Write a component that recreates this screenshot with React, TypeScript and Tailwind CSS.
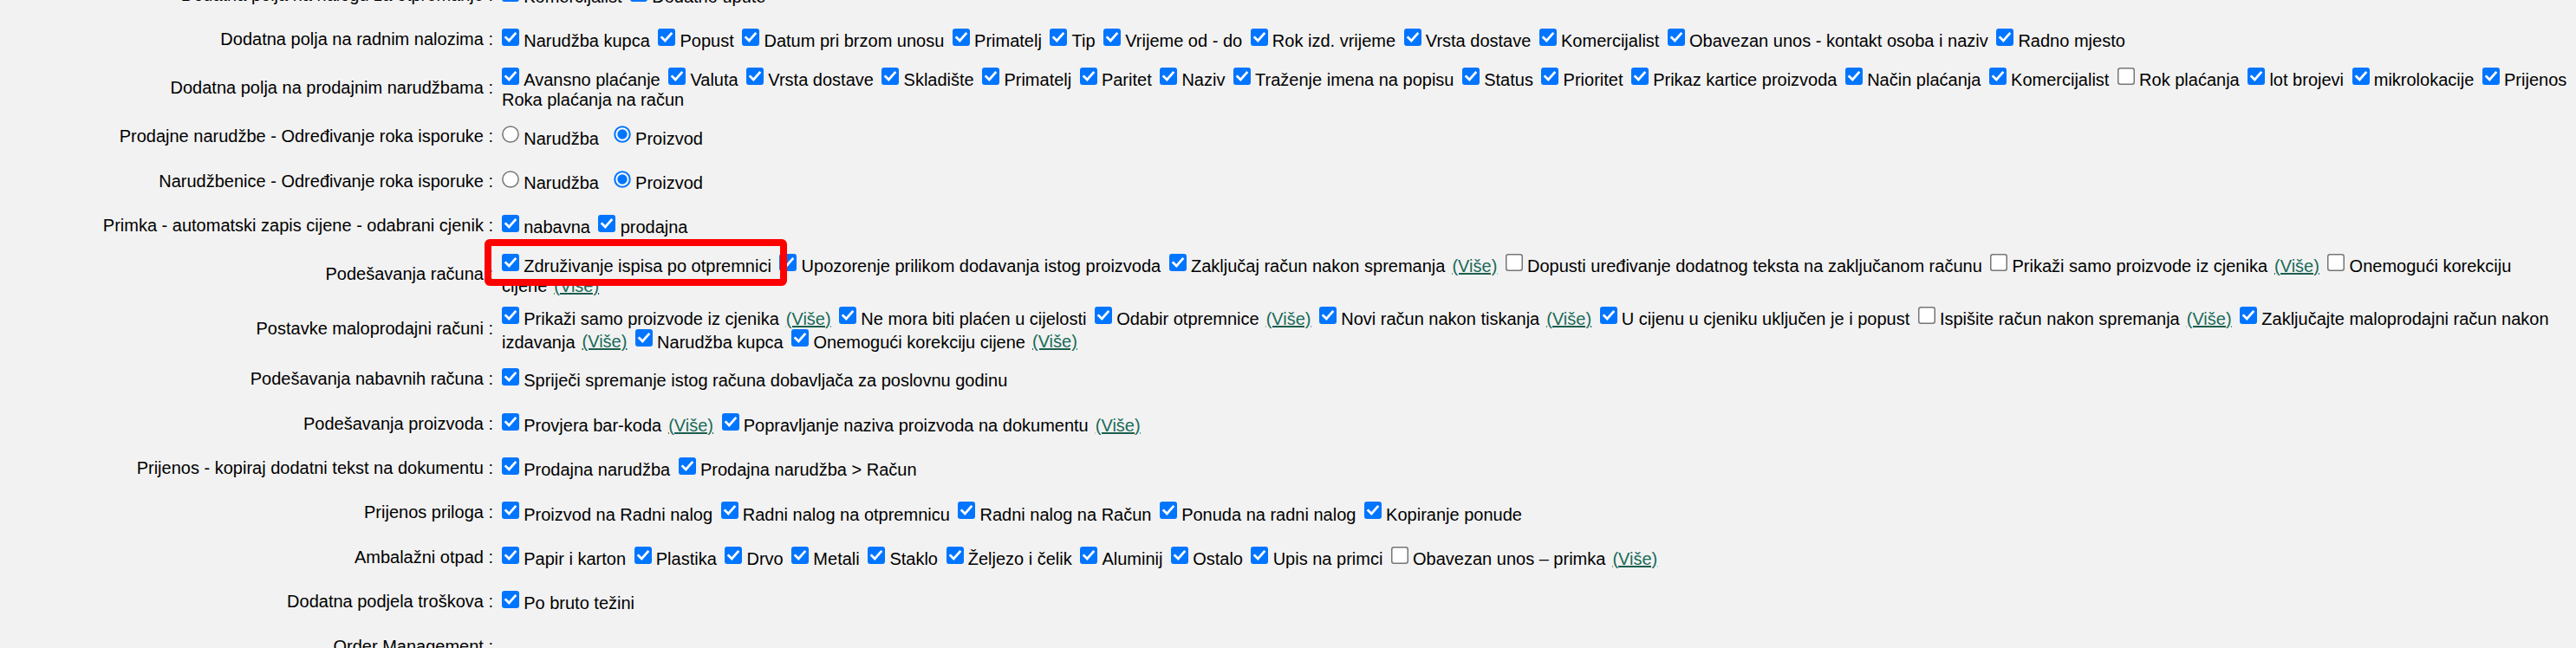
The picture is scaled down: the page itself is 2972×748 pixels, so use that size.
import React from "react";

type Seg = { c?: boolean; r?: boolean; text: string; more?: boolean };
type Row = { label: string; lines: Seg[][] };

const on = (text: string, more?: boolean): Seg => ({ c: true, text, more });
const off = (text: string, more?: boolean): Seg => ({ c: false, text, more });
const rad = (text: string, checked: boolean): Seg => ({ r: checked, text });
const txt = (text: string, more?: boolean): Seg => ({ text, more });

const rows: Row[] = [
  {
    label: "Dodatna polja na nalogu za otpremanje :",
    lines: [[on("Komercijalist"), on("Dodatno upute")]],
  },
  {
    label: "Dodatna polja na radnim nalozima :",
    lines: [
      [
        on("Narudžba kupca"),
        on("Popust"),
        on("Datum pri brzom unosu"),
        on("Primatelj"),
        on("Tip"),
        on("Vrijeme od - do"),
        on("Rok izd. vrijeme"),
        on("Vrsta dostave"),
        on("Komercijalist"),
        on("Obavezan unos - kontakt osoba i naziv"),
        on("Radno mjesto"),
      ],
    ],
  },
  {
    label: "Dodatna polja na prodajnim narudžbama :",
    lines: [
      [
        on("Avansno plaćanje"),
        on("Valuta"),
        on("Vrsta dostave"),
        on("Skladište"),
        on("Primatelj"),
        on("Paritet"),
        on("Naziv"),
        on("Traženje imena na popisu"),
        on("Status"),
        on("Prioritet"),
        on("Prikaz kartice proizvoda"),
        on("Način plaćanja"),
        on("Komercijalist"),
        off("Rok plaćanja"),
        on("lot brojevi"),
        on("mikrolokacije"),
        on("Prijenos"),
      ],
      [txt("Roka plaćanja na račun")],
    ],
  },
  {
    label: "Prodajne narudžbe - Određivanje roka isporuke :",
    lines: [[rad("Narudžba", false), rad("Proizvod", true)]],
  },
  {
    label: "Narudžbenice - Određivanje roka isporuke :",
    lines: [[rad("Narudžba", false), rad("Proizvod", true)]],
  },
  {
    label: "Primka - automatski zapis cijene - odabrani cjenik :",
    lines: [[on("nabavna"), on("prodajna")]],
  },
  {
    label: "Podešavanja računa :",
    lines: [
      [
        on("Združivanje ispisa po otpremnici"),
        on("Upozorenje prilikom dodavanja istog proizvoda"),
        on("Zaključaj račun nakon spremanja", true),
        off("Dopusti uređivanje dodatnog teksta na zaključanom računu"),
        off("Prikaži samo proizvode iz cjenika", true),
        off("Onemogući korekciju"),
      ],
      [txt("cijene", true)],
    ],
  },
  {
    label: "Postavke maloprodajni računi :",
    lines: [
      [
        on("Prikaži samo proizvode iz cjenika", true),
        on("Ne mora biti plaćen u cijelosti"),
        on("Odabir otpremnice", true),
        on("Novi račun nakon tiskanja", true),
        on("U cijenu u cjeniku uključen je i popust"),
        off("Ispišite račun nakon spremanja", true),
        on("Zaključajte maloprodajni račun nakon"),
      ],
      [txt("izdavanja", true), on("Narudžba kupca"), on("Onemogući korekciju cijene", true)],
    ],
  },
  {
    label: "Podešavanja nabavnih računa :",
    lines: [[on("Spriječi spremanje istog računa dobavljača za poslovnu godinu")]],
  },
  {
    label: "Podešavanja proizvoda :",
    lines: [[on("Provjera bar-koda", true), on("Popravljanje naziva proizvoda na dokumentu", true)]],
  },
  {
    label: "Prijenos - kopiraj dodatni tekst na dokumentu :",
    lines: [[on("Prodajna narudžba"), on("Prodajna narudžba > Račun")]],
  },
  {
    label: "Prijenos priloga :",
    lines: [
      [
        on("Proizvod na Radni nalog"),
        on("Radni nalog na otpremnicu"),
        on("Radni nalog na Račun"),
        on("Ponuda na radni nalog"),
        on("Kopiranje ponude"),
      ],
    ],
  },
  {
    label: "Ambalažni otpad :",
    lines: [
      [
        on("Papir i karton"),
        on("Plastika"),
        on("Drvo"),
        on("Metali"),
        on("Staklo"),
        on("Željezo i čelik"),
        on("Aluminij"),
        on("Ostalo"),
        on("Upis na primci"),
        off("Obavezan unos – primka", true),
      ],
    ],
  },
  {
    label: "Dodatna podjela troškova :",
    lines: [[on("Po bruto težini")]],
  },
  { label: "Order Management :", lines: [[]] },
  { label: "Ostale postavke :", lines: [[]] },
];

function Checkbox({ checked, first }: { checked: boolean; first: boolean }) {
  return (
    <svg
      width="20"
      height="20"
      viewBox="0 0 20 20"
      className={
        "inline-block align-baseline mt-[0.8px] mb-[1px] mr-[5.2px] " +
        (first ? "ml-0" : "ml-[9.5px]")
      }
    >
      {checked ? (
        <>
          <rect x="0" y="0" width="20" height="20" rx="3" fill="#0075ff" />
          <path
            d="M4.6 10.3 L8.3 14 L15.4 5.9"
            fill="none"
            stroke="#ffffff"
            strokeWidth="2.7"
            strokeLinecap="square"
            strokeLinejoin="miter"
          />
        </>
      ) : (
        <rect
          x="0.75"
          y="0.75"
          width="18.5"
          height="18.5"
          rx="2.5"
          fill="#ffffff"
          stroke="#767676"
          strokeWidth="1.5"
        />
      )}
    </svg>
  );
}

function Radio({ checked, first }: { checked: boolean; first: boolean }) {
  return (
    <svg
      width="20"
      height="20"
      viewBox="0 0 20 20"
      className={
        "inline-block align-baseline mt-[0.8px] mb-[1px] mr-[5.2px] " +
        (first ? "ml-0" : "ml-[17px]")
      }
    >
      {checked ? (
        <>
          <circle cx="10" cy="10" r="9.75" fill="#0075ff" />
          <circle cx="10" cy="10" r="7.7" fill="#ffffff" />
          <circle cx="10" cy="10" r="5.7" fill="#0075ff" />
        </>
      ) : (
        <circle cx="10" cy="10" r="9.1" fill="#ffffff" stroke="#767676" strokeWidth="1.5" />
      )}
    </svg>
  );
}

function More() {
  return (
    <a href="#" className="ml-[8px] text-[#1a6a58] underline decoration-[#1d5e4e]">
      (Više)
    </a>
  );
}

function Line({ segs }: { segs: Seg[] }) {
  return (
    <div className="whitespace-nowrap">
      {segs.map((s, i) => (
        <React.Fragment key={i}>
          {s.c !== undefined && <Checkbox checked={s.c} first={i === 0} />}
          {s.r !== undefined && <Radio checked={s.r} first={i === 0} />}
          <span>{s.text}</span>
          {s.more && <More />}
        </React.Fragment>
      ))}
      {segs.length === 0 && <span>&nbsp;</span>}
    </div>
  );
}

export default function App() {
  return (
    <div className="relative h-[748px] w-full overflow-hidden bg-[#f2f2f2] text-black font-['Liberation_Sans',Arial,sans-serif] text-[20px] leading-[23px]">
      <div className="mt-[-31.4px]">
        {rows.map((row, idx) => (
          <div key={idx} className="flex items-center min-h-[51.4px] py-[5.55px]">
            <div className="w-[579px] shrink-0 pr-[10px] text-right whitespace-nowrap">
              {row.label}
            </div>
            <div className="flex-1 min-w-0">
              {row.lines.map((l, j) => (
                <Line key={j} segs={l} />
              ))}
            </div>
          </div>
        ))}
      </div>
      <div className="absolute left-[559px] top-[275.5px] w-[349px] h-[54.5px] border-[8px] border-[#ff0000] rounded-[6px] pointer-events-none" />
    </div>
  );
}
